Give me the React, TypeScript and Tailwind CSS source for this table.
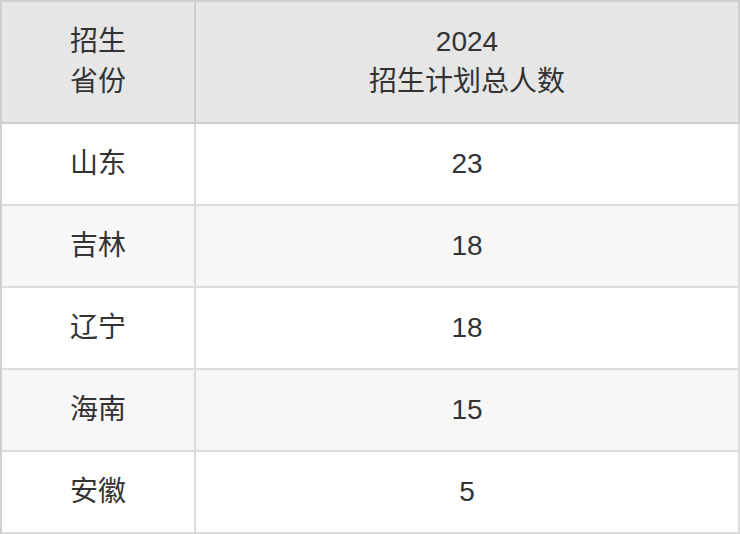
import React from "react";

const rows = [
  ["山东", "23"],
  ["吉林", "18"],
  ["辽宁", "18"],
  ["海南", "15"],
  ["安徽", "5"],
];

export default function App() {
  return (
    <div
      className="w-[740px] h-[534px] bg-white text-[#333333] text-[28px] leading-[40px]"
      style={{ fontFamily: '"Liberation Sans", Arial, "Noto Sans CJK SC", sans-serif' }}
    >
      <div className="flex flex-col border-t-2 border-l-2 border-[#cfcfcf]">
        <div className="flex h-[122px] bg-[#e6e6e6]">
          <div className="w-[194px] border-r-2 border-b-2 border-[#cfcfcf] flex items-center justify-center text-center">
            <div>
              招生
              <br />
              省份
            </div>
          </div>
          <div className="w-[544px] border-r-2 border-b-2 border-[#cfcfcf] flex items-center justify-center text-center">
            <div>
              2024
              <br />
              招生计划总人数
            </div>
          </div>
        </div>
        {rows.map(([p, n], i) => (
          <div key={p} className={`flex h-[82px] ${i % 2 === 1 ? "bg-[#f7f7f7]" : "bg-white"}`}>
            <div className="w-[194px] border-r-2 border-b-2 border-[#dcdcdc] flex items-center justify-center">
              {p}
            </div>
            <div className="w-[544px] border-r-2 border-b-2 border-[#dcdcdc] flex items-center justify-center">
              {n}
            </div>
          </div>
        ))}
      </div>
    </div>
  );
}
